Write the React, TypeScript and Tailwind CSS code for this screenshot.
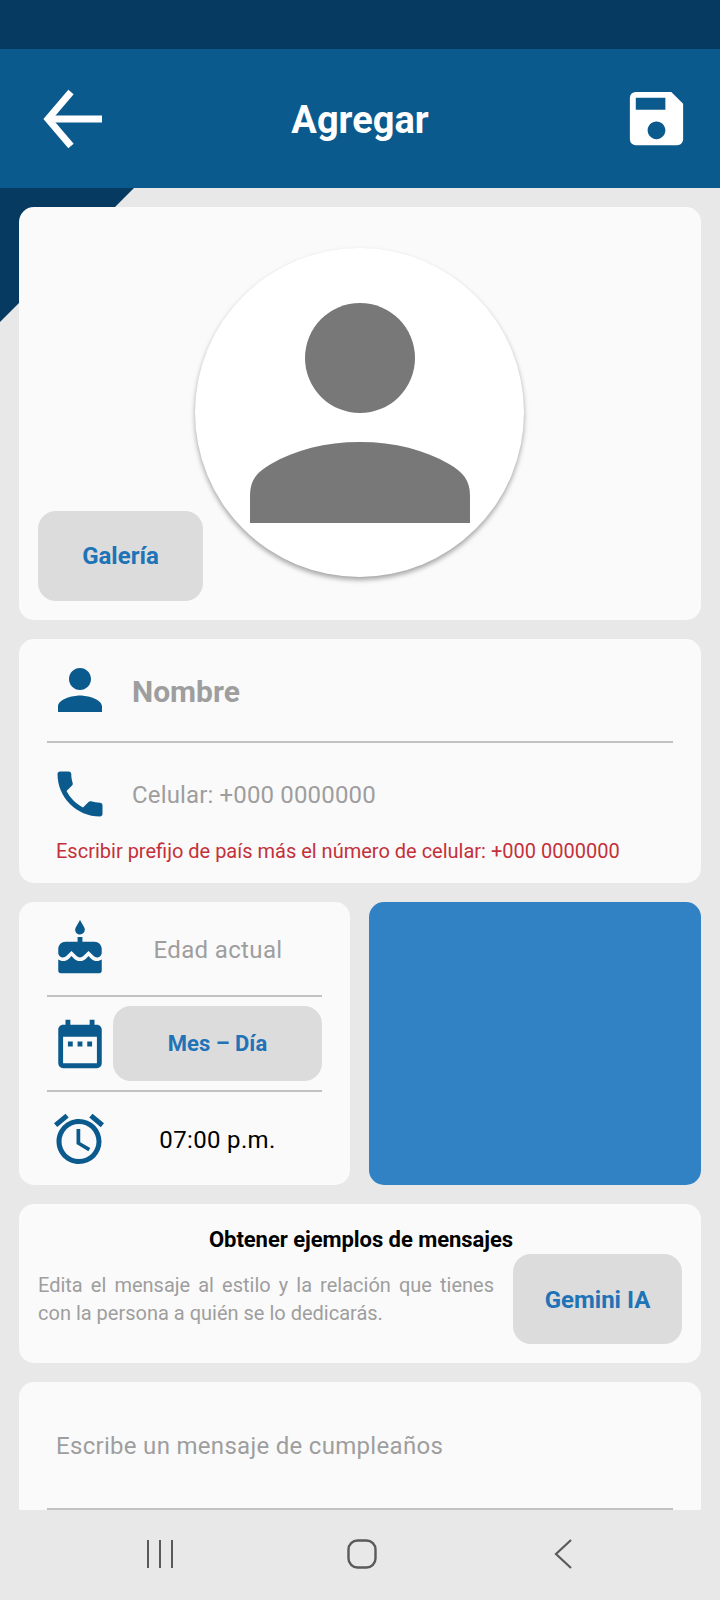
import React from 'react'
import { MdAccessAlarm, MdCake, MdDateRange, MdPerson, MdPhone, MdSave } from 'react-icons/md'

function Divider() {
  return <div className="h-[2px] bg-[#c2c2c2]" />
}

function BackArrow() {
  return (
    <svg width="60" height="60" viewBox="0 0 60 60" fill="none" stroke="white" strokeWidth="7">
      <path d="M59 30H6" />
      <path d="M28 3 5 30l23 27" />
    </svg>
  )
}

function NavBar() {
  return (
    <nav className="h-[90px] shrink-0 bg-[#e8e8e8] flex items-start pt-[29px]">
      <div className="w-[320px] flex justify-end pr-[146px]">
        <svg width="28" height="30" viewBox="0 0 28 30" fill="none" stroke="#5a5a5a" strokeWidth="2">
          <path d="M2 1v28M14 1v28M26 1v28" />
        </svg>
      </div>
      <div className="ml-[27px]">
        <svg width="30" height="30" viewBox="0 0 30 30" fill="none" stroke="#5a5a5a" strokeWidth="2.4">
          <rect x="1.5" y="1.5" width="27" height="27" rx="9" />
        </svg>
      </div>
      <div className="ml-[176px]">
        <svg width="20" height="30" viewBox="0 0 20 30" fill="none" stroke="#5a5a5a" strokeWidth="2.2">
          <path d="M18 1 3 15l15 14" />
        </svg>
      </div>
    </nav>
  )
}

export default function App() {
  return (
    <div className="relative w-[720px] h-[1600px] overflow-hidden bg-[#e8e8e8] flex flex-col font-['Roboto',sans-serif]">
      <div className="h-[49px] shrink-0 bg-[#063a61]" />
      <header className="h-[139px] shrink-0 bg-[#0b5a8e] flex items-center justify-between pl-[43px] pr-[28px] relative z-10">
        <BackArrow />
        <h1 className="ml-[-4px] pt-[4px] text-[38px] font-bold text-white">Agregar</h1>
        <MdSave size={71} color="white" />
      </header>

      {/* esquina oscura detras de la primera tarjeta */}
      <div className="absolute left-0 top-[188px] w-[134px] h-[134px] bg-[#063a61] [clip-path:polygon(0_0,100%_0,0_100%)]" />

      <main className="relative flex-1 overflow-hidden px-[19px] pt-[19px] flex flex-col gap-[19px]">
        <section className="relative shrink-0 h-[413px] rounded-[15px] bg-[#fafafa] pt-[41px]">
          <div className="relative mx-auto w-[329px] h-[329px] rounded-full bg-white shadow-[0_3px_5px_rgba(0,0,0,0.35)] translate-x-[-1px]">
            <svg className="absolute inset-0" width="329" height="329" viewBox="0 0 329 329" fill="#787878">
              <circle cx="165" cy="110" r="55" />
              <path d="M55 275V248C55 232 62 224 76 216 100 202 130 194 165 194S230 202 254 216C268 224 275 232 275 248V275Z" />
            </svg>
          </div>
          <button className="absolute left-[19px] bottom-[19px] w-[165px] h-[90px] rounded-[18px] bg-[#dcdcdc] text-[24px] font-bold text-[#1f73b7]">
            Galería
          </button>
        </section>

        <section className="shrink-0 h-[244px] rounded-[15px] bg-[#fafafa] px-[28px]">
          <div className="h-[102px] flex items-center">
            <MdPerson size={66} color="#0b5a8e" className="shrink-0" />
            <span className="ml-[19px] pt-[2px] text-[30px] font-bold text-[#9e9e9e]">Nombre</span>
          </div>
          <Divider />
          <div className="h-[92px] pt-[10px] flex items-center">
            <MdPhone size={60} color="#0b5a8e" className="ml-[3px] shrink-0" />
            <span className="ml-[22px] pt-[2px] text-[24px] text-[#9e9e9e] tracking-[0.15px]">Celular: +000 0000000</span>
          </div>
          <p className="ml-[9px] mt-[2px] text-[20px] leading-[28px] text-[#c4303a]">
            Escribir prefijo de país más el número de celular: +000 0000000
          </p>
        </section>

        <div className="shrink-0 grid grid-cols-[331px_1fr] gap-[19px] h-[283px]">
          <section className="rounded-[15px] bg-[#fafafa] px-[28px]">
            <div className="h-[93px] flex items-center">
              <MdCake size={58} color="#0b5a8e" className="shrink-0 ml-[4px]" />
              <span className="flex-1 pl-[5px] pt-[3px] text-center text-[24px] text-[#9e9e9e] tracking-[0.35px]">Edad actual</span>
            </div>
            <Divider />
            <div className="h-[93px] flex items-center">
              <MdDateRange size={58} color="#0b5a8e" className="shrink-0 ml-[4px] mr-[4px]" />
              <button className="flex-1 h-[75px] rounded-[18px] bg-[#dcdcdc] text-[22px] font-bold text-[#1f73b7]">
                Mes – Día
              </button>
            </div>
            <Divider />
            <div className="h-[93px] flex items-center">
              <MdAccessAlarm size={60} color="#0b5a8e" className="shrink-0 ml-[2px]" />
              <span className="flex-1 pl-[4px] pt-[2px] text-center text-[24px] text-black tracking-[0.35px]">07:00 p.m.</span>
            </div>
          </section>
          <section className="rounded-[15px] bg-[#3182c4]" />
        </div>

        <section className="shrink-0 h-[159px] rounded-[15px] bg-[#fafafa] px-[19px] pt-[22px]">
          <h2 className="pl-[2px] text-center text-[22px] leading-[28px] font-bold text-black tracking-[-0.05px]">Obtener ejemplos de mensajes</h2>
          <div className="flex items-center gap-[19px]">
            <p className="w-[456px] shrink-0 text-[20px] leading-[28px] text-[#9e9e9e] text-justify">
              Edita el mensaje al estilo y la relación que tienes con la persona a quién se lo dedicarás.
            </p>
            <button className="w-[169px] h-[90px] shrink-0 rounded-[18px] bg-[#dcdcdc] pt-[2px] text-[24px] font-bold text-[#1f73b7]">
              Gemini IA
            </button>
          </div>
        </section>

        <section className="shrink-0 h-[200px] rounded-[15px] bg-[#fafafa] px-[28px]">
          <div className="h-[126px] pt-[2px] flex items-center">
            <span className="ml-[9px] text-[24px] text-[#9e9e9e] tracking-[0.3px]">Escribe un mensaje de cumpleaños</span>
          </div>
          <Divider />
        </section>
      </main>

      <NavBar />
    </div>
  )
}
